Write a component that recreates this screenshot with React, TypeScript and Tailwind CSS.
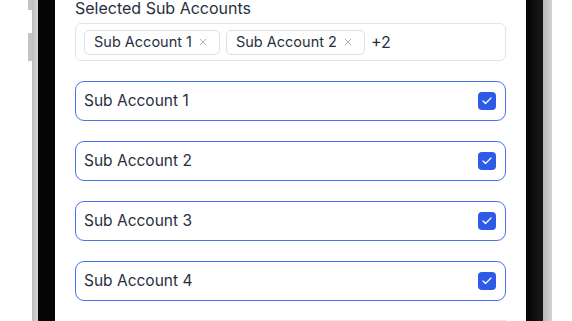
import { Check, X } from "lucide-react";

const accounts = ["Sub Account 1", "Sub Account 2", "Sub Account 3", "Sub Account 4"];

function Chip({ label }: { label: string }) {
  return (
    <div className="flex h-[25px] items-center gap-[5px] rounded-[5px] border border-[#dcdfe5] pl-[9px] pr-[10px] text-[14.5px] text-[#283040]">
      <span>{label}</span>
      <X size={12} strokeWidth={1.6} className="text-[#9aa0ab]" />
    </div>
  );
}

function AccountRow({ label }: { label: string }) {
  return (
    <div className="flex h-[40px] items-center justify-between rounded-[9px] border border-[#4673f0] pl-[8px] pr-[9px] text-[15.5px] text-[#283040]">
      <span>{label}</span>
      <div className="flex h-[18px] w-[18px] items-center justify-center rounded-[4px] bg-[#2d5ae6]">
        <Check size={12} strokeWidth={2.5} className="text-white" />
      </div>
    </div>
  );
}

export default function App() {
  return (
    <div className="flex h-[321px] w-[572px] overflow-hidden bg-white" style={{ fontFamily: "Inter, 'Noto Sans', sans-serif" }}>
      {/* left side buttons */}
      <div className="flex w-[32px] flex-col items-end">
        <div className="h-[10px] w-[4px] bg-[#c4c4c4]" />
        <div className="mt-[23px] h-[28px] w-[4px] bg-[#c4c4c4]" />
      </div>
      <div className="w-[6px] bg-gradient-to-r from-[#bdbdbd] to-[#d6d6d6]" />
      <div className="w-[17px] bg-[#050505]" />

      {/* screen */}
      <div className="w-[471px] px-[20px]">
        <div className="mt-[-4px] text-[16px] leading-[24px] text-[#283040]">Selected Sub Accounts</div>
        <div className="mt-[3px] flex h-[38px] items-center gap-[6px] rounded-[6px] border border-[#e2e4e9] px-[8px]">
          <Chip label="Sub Account 1" />
          <Chip label="Sub Account 2" />
          <span className="text-[16px] text-[#283040]">+2</span>
        </div>
        <div className="mt-[20px] flex flex-col gap-[20px]">
          {accounts.map((a) => (
            <AccountRow key={a} label={a} />
          ))}
        </div>
        <div className="mt-[19px] ml-[5px] h-[1px] bg-[#e5e7eb]" />
      </div>

      <div className="w-[17px] bg-gradient-to-r from-[#050505] to-[#1a1a1a]" />
      <div className="w-[9px] bg-gradient-to-r from-[#b8b8b8] to-[#d4d4d4]" />
      <div className="flex-1" />
    </div>
  );
}
